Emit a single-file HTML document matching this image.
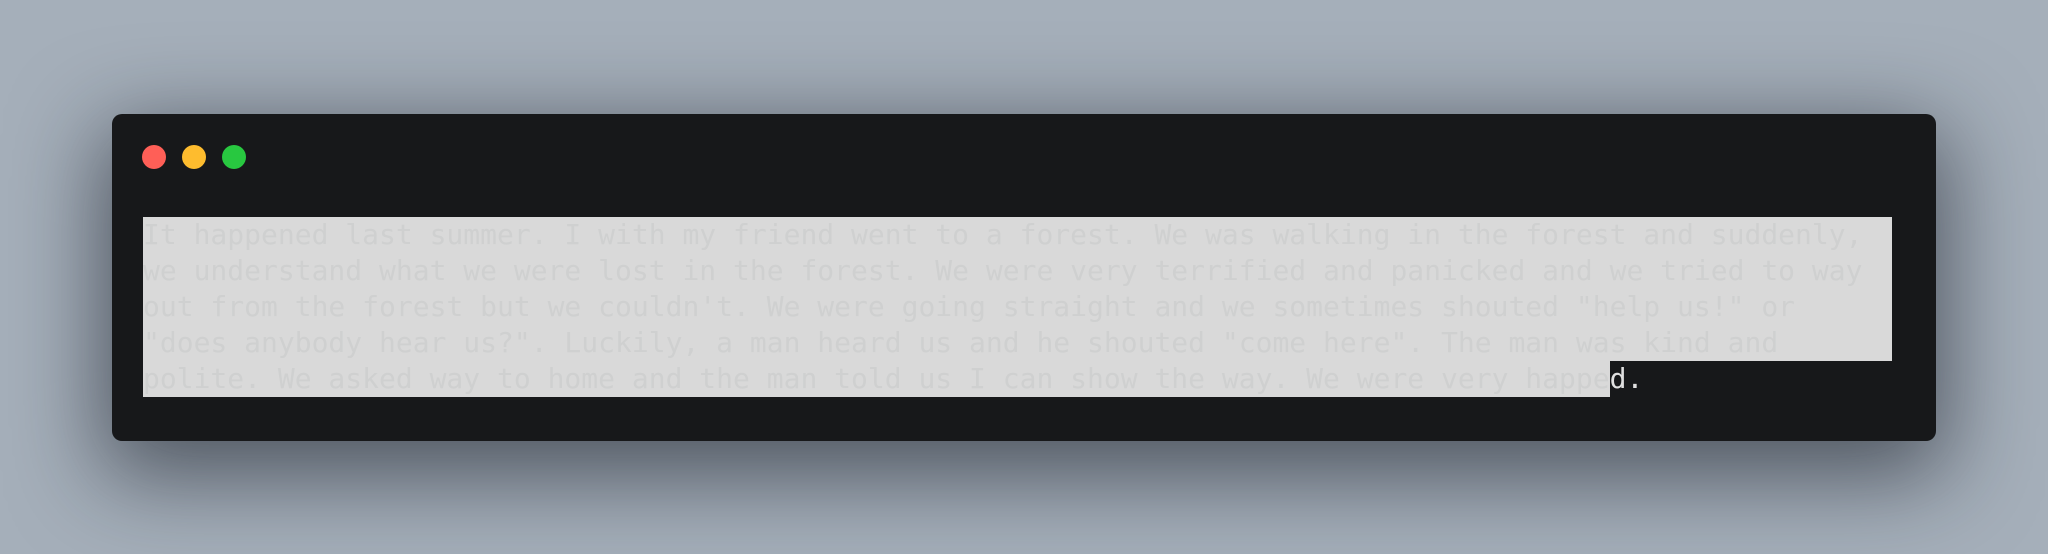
<!DOCTYPE html>
<html><head><style>
html,body{margin:0;padding:0}
body{width:2048px;height:554px;background:#a5afba;position:relative;overflow:hidden;font-family:"DejaVu Sans Mono","Liberation Mono",monospace}
.win{position:absolute;left:112px;top:114px;width:1824px;height:327px;background:#17181a;border-radius:10px;box-shadow:0 25px 90px 10px rgba(20,25,35,0.6)}
.dot{position:absolute;top:145px;width:24px;height:24px;border-radius:50%}
.txt{position:absolute;left:143px;top:217px;font-size:28px;line-height:36px;color:#cfd0d0;white-space:pre}
.l{display:block;width:1749px;background:#d9d9d9;height:36px}
.last{display:block;height:36px}
.s{background:#d9d9d9;display:inline-block;height:36px}
.w{color:#e0e0e0;display:inline-block;height:36px}
</style></head><body>
<div class="win"></div>
<div class="dot" style="left:142px;background:#ff5f57"></div>
<div class="dot" style="left:182px;background:#febc2e"></div>
<div class="dot" style="left:222px;background:#28c840"></div>
<div class="txt"><span class="l">It happened last summer. I with my friend went to a forest. We was walking in the forest and suddenly,</span><span class="l">we understand what we were lost in the forest. We were very terrified and panicked and we tried to way</span><span class="l">out from the forest but we couldn't. We were going straight and we sometimes shouted "help us!" or</span><span class="l">"does anybody hear us?". Luckily, a man heard us and he shouted "come here". The man was kind and</span><span class="last"><span class="s">polite. We asked way to home and the man told us I can show the way. We were very happe</span><span class="w">d.</span></span></div>
</body></html>
